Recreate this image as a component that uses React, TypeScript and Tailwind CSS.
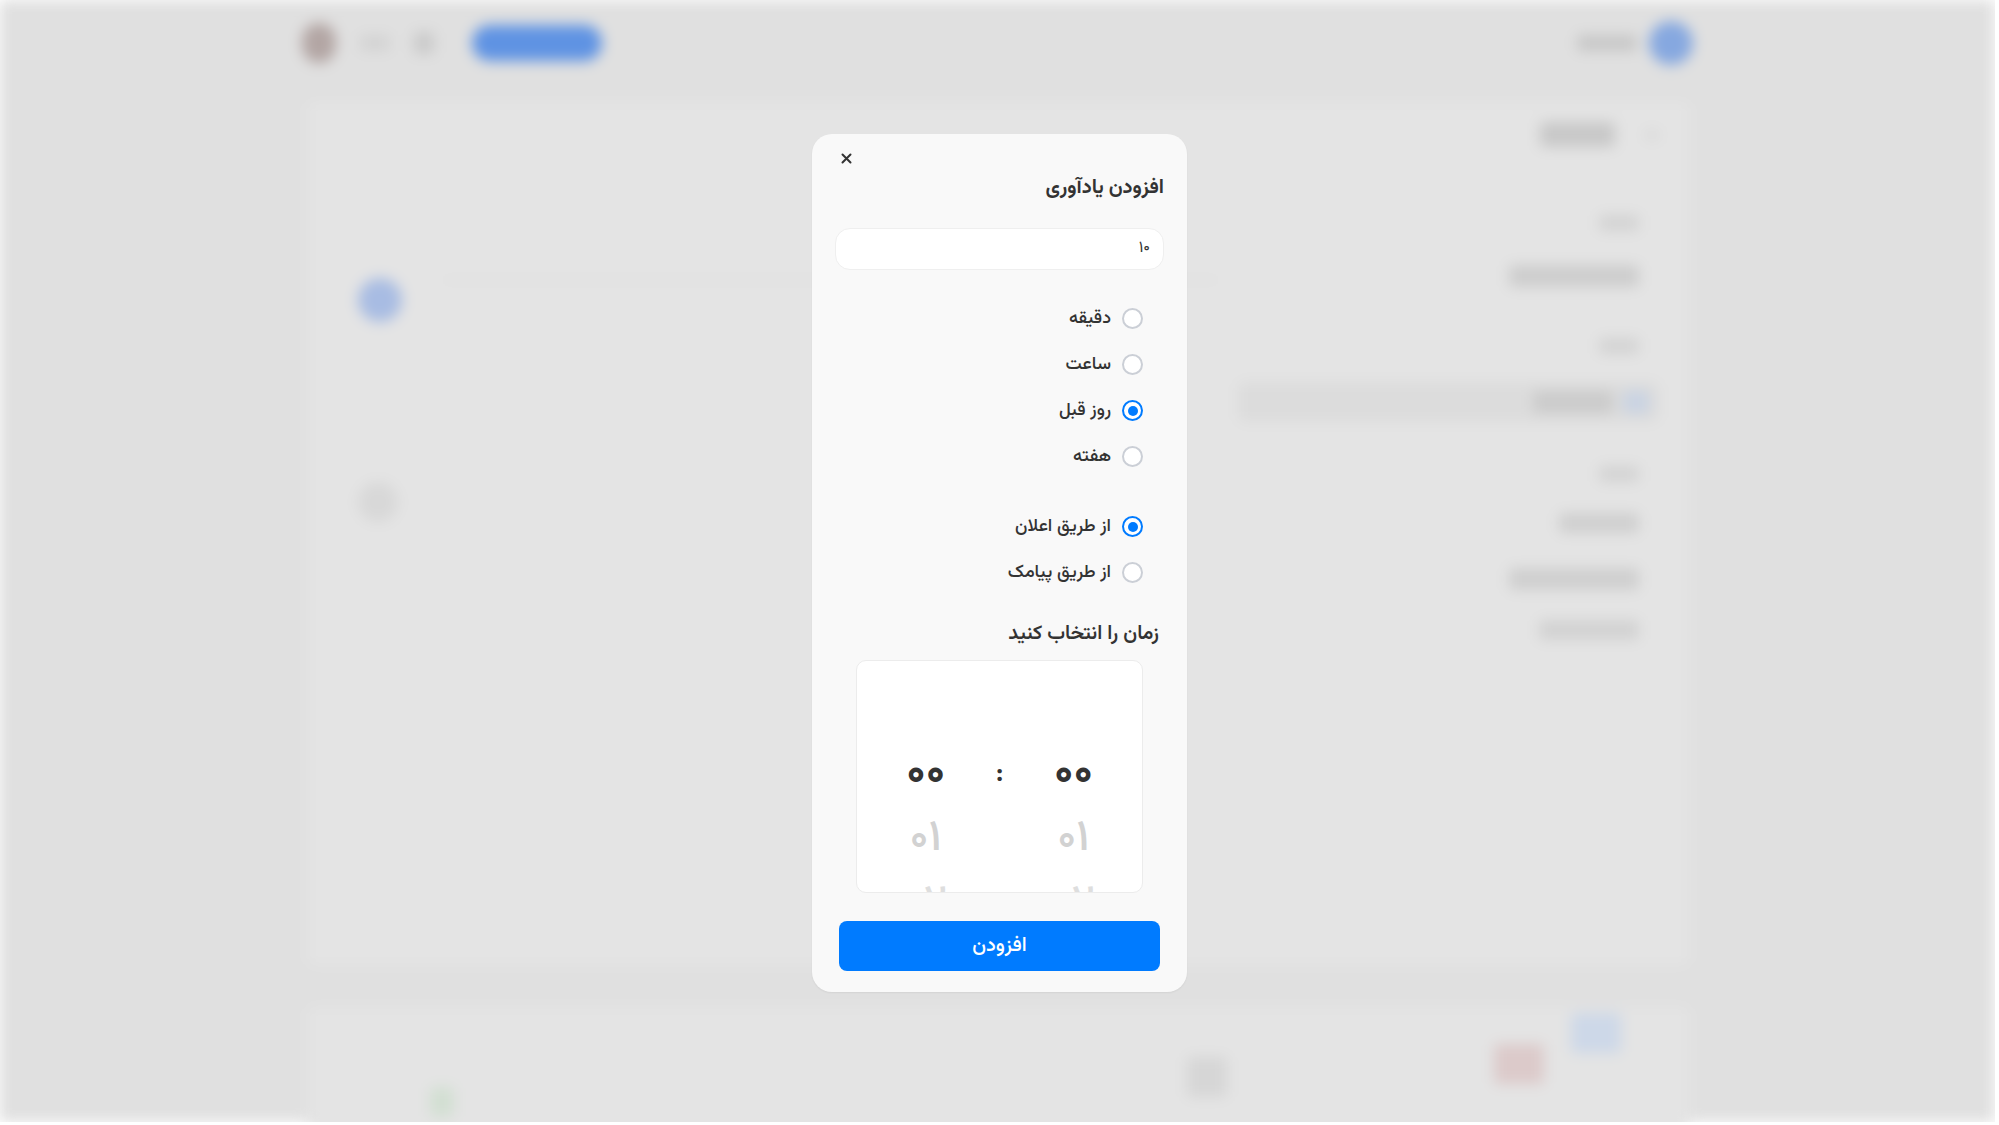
import React from "react";

const FONT = { fontFamily: '"Vazirmatn", "Noto Sans Arabic", "DejaVu Sans", sans-serif' };

function Radio({ label, checked }: { label: string; checked?: boolean }) {
  return (
    <div className="flex h-[46px] items-center gap-[11px] pr-[21px]">
      <span
        className={
          checked
            ? "flex h-[21px] w-[21px] items-center justify-center rounded-full border-[2.5px] border-[#007bff] bg-white"
            : "h-[21px] w-[21px] rounded-full border-2 border-[#cbcfd6] bg-white"
        }
      >
        {checked && <span className="h-[10px] w-[10px] rounded-full bg-[#007bff]" />}
      </span>
      <span className="text-[18px] font-medium leading-none text-[#333]">{label}</span>
    </div>
  );
}

function Blob({ className }: { className: string }) {
  return <div className={className} />;
}

function Background() {
  return (
    <div className="h-full w-full border-l-2 border-[#d6d6d6] bg-[#e0e0e0] blur-[7px]">
      {/* header */}
      <div className="flex h-[87px] items-center justify-between border-b border-[#d9d9d9] pl-[300px] pr-[302px]">
        <div className="flex items-center gap-[24px]">
          <Blob className="h-[40px] w-[34px] rounded-full bg-[#b3a6a4]" />
          <Blob className="h-[16px] w-[30px] rounded bg-[#d3d3d3]" />
          <Blob className="h-[22px] w-[20px] rounded bg-[#cacaca]" />
          <Blob className="ml-[14px] h-[36px] w-[130px] rounded-full bg-[#5f93e3]" />
        </div>
        <div className="flex items-center gap-[12px]">
          <Blob className="h-[16px] w-[60px] rounded bg-[#c7c7c7]" />
          <Blob className="h-[44px] w-[44px] rounded-full bg-[#86a8e0]" />
        </div>
      </div>
      {/* main card */}
      <div className="mx-[306px] mt-[15px] flex h-[863px] rounded-lg bg-[#e4e4e4]">
        <div className="flex flex-1 flex-col pl-[50px] pt-[176px]">
          <div className="flex items-center gap-[40px]">
            <Blob className="h-[44px] w-[44px] rounded-full bg-[#a8bce3]" />
            <Blob className="mt-[-40px] h-[2px] flex-1 bg-[#dcdcdc]" />
          </div>
          <Blob className="mt-[160px] h-[40px] w-[40px] rounded-full bg-[#d8d8d8]" />
        </div>
        <div className="flex w-[470px] flex-col items-end pr-[30px] pt-[20px]">
          <div className="flex items-center gap-[30px]">
            <Blob className="h-[25px] w-[75px] rounded bg-[#c8c8c8]" />
            <Blob className="h-[10px] w-[14px] rounded bg-[#d8d8d8]" />
          </div>
          <Blob className="mr-[20px] mt-[68px] h-[16px] w-[40px] rounded bg-[#d3d3d3]" />
          <Blob className="mr-[20px] mt-[34px] h-[22px] w-[130px] rounded bg-[#cdcdcd]" />
          <Blob className="mr-[20px] mt-[51px] h-[16px] w-[40px] rounded bg-[#d3d3d3]" />
          <div className="mt-[28px] flex h-[40px] w-[421px] items-center justify-end gap-[10px] rounded-lg bg-[#dcdcdc] pr-[10px]">
            <Blob className="h-[22px] w-[80px] rounded bg-[#cbcbcb]" />
            <Blob className="h-[22px] w-[26px] rounded bg-[#c9d3e3]" />
          </div>
          <Blob className="mr-[20px] mt-[44px] h-[16px] w-[40px] rounded bg-[#d3d3d3]" />
          <Blob className="mr-[20px] mt-[31px] h-[20px] w-[80px] rounded bg-[#cfcfcf]" />
          <Blob className="mr-[20px] mt-[35px] h-[22px] w-[130px] rounded bg-[#cfcfcf]" />
          <Blob className="mr-[20px] mt-[30px] h-[20px] w-[100px] rounded bg-[#d2d2d2]" />
        </div>
      </div>
      <div className="mx-[306px] mt-[42px] flex h-[160px] items-start rounded-lg bg-[#e4e4e4]">
        <Blob className="ml-[122px] mt-[80px] h-[30px] w-[24px] rounded bg-[#d2dfd2]" />
        <Blob className="ml-[733px] mt-[50px] h-[40px] w-[40px] rounded bg-[#d6d6d6]" />
        <Blob className="ml-[267px] mt-[37px] h-[40px] w-[50px] rounded bg-[#dccaca]" />
        <Blob className="ml-[27px] mt-[6px] h-[40px] w-[50px] rounded bg-[#cdd8e8]" />
      </div>
    </div>
  );
}

function DigitColumn() {
  return (
    <div className="flex w-[60px] shrink-0 flex-col items-center">
      <div className="h-[82px] shrink-0" />
      <div className="flex h-[65px] shrink-0 items-center text-[44px] font-bold leading-none text-[#333]">۰۰</div>
      <div className="flex h-[65px] shrink-0 items-center text-[44px] font-medium leading-none text-[#d2d2d2]">۰۱</div>
      <div className="flex h-[65px] shrink-0 items-center text-[44px] font-medium leading-none text-[#dedede]">۰۲</div>
    </div>
  );
}

export default function App() {
  return (
    <div className="relative h-[1125px] w-[1999px] overflow-hidden bg-white" style={FONT}>
      <div className="h-[1122px] w-[1995px] overflow-hidden">
        <Background />
      </div>
      <div className="absolute inset-0 flex items-center justify-center">
        <div
          dir="rtl"
          className="flex h-[858px] w-[375px] flex-col rounded-[20px] bg-[#f9f9f9] px-[23px] pt-[16px] shadow-[0_1px_2px_rgba(0,0,0,0.06)]"
        >
          <div className="flex h-[18px] items-center justify-end pl-[6px]">
            <svg width="11" height="11" viewBox="0 0 11 11" aria-label="close">
              <path d="M1.5 1.5 L9.5 9.5 M9.5 1.5 L1.5 9.5" stroke="#333" strokeWidth="2" strokeLinecap="round" />
            </svg>
          </div>
          <div className="mt-[6px] h-[28px] text-[20px] font-bold leading-[28px] text-[#333]">افزودن یادآوری</div>
          <div className="mt-[26px] flex h-[42px] items-center rounded-[15px] border border-[#efefef] bg-white px-[13px] text-[16px] text-[#333]">
            ۱۰
          </div>
          <div className="mt-[26px] flex flex-col">
            <Radio label="دقیقه" />
            <Radio label="ساعت" />
            <Radio label="روز قبل" checked />
            <Radio label="هفته" />
          </div>
          <div className="mt-[24px] flex flex-col">
            <Radio label="از طریق اعلان" checked />
            <Radio label="از طریق پیامک" />
          </div>
          <div className="mt-[24px] h-[28px] pr-[5px] text-[20px] font-semibold leading-[28px] text-[#333]">
            زمان را انتخاب کنید
          </div>
          <div className="mx-[21px] mt-[12px] flex h-[233px] shrink-0 justify-center gap-[40px] overflow-hidden rounded-[10px] border border-[#ececec] bg-white">
            <DigitColumn />
            <div className="flex shrink-0 flex-col items-center">
              <div className="h-[82px] shrink-0" />
              <div className="flex h-[65px] shrink-0 items-center text-[26px] font-bold leading-none text-[#333]">:</div>
            </div>
            <DigitColumn />
          </div>
          <button className="mx-[4px] mt-[28px] flex h-[50px] shrink-0 items-center justify-center rounded-[8px] bg-[#007bff] text-[20px] font-medium text-white">
            افزودن
          </button>
        </div>
      </div>
    </div>
  );
}
